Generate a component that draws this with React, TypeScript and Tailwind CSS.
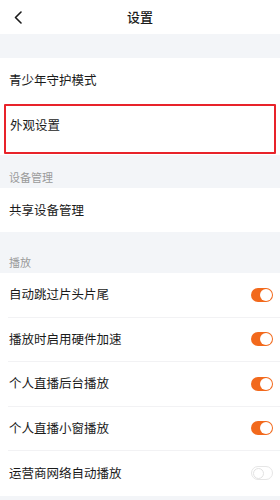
const font = { fontFamily: '"Noto Sans CJK SC", "Noto Sans", sans-serif' };

const Toggle = ({ on }: { on: boolean }) =>
  on ? (
    <div className="w-[22px] h-[14px] rounded-full bg-[#f2691c] flex items-center justify-end pr-[1px]">
      <div className="w-[12px] h-[12px] rounded-full bg-white" />
    </div>
  ) : (
    <div className="w-[22px] h-[14px] rounded-full bg-white border border-[#e6e6e6] flex items-center pl-[1px]">
      <div className="w-[11px] h-[11px] rounded-full bg-white border border-[#e2e2e2]" />
    </div>
  );

const SectionLabel = ({ title, h }: { title: string; h: string }) => (
  <div className={`${h} flex items-end px-[9px] pb-[4px]`}>
    <span className="text-[11px] leading-[14px] text-[#9a9a9a]">{title}</span>
  </div>
);

export default function App() {
  const playItems = [
    { label: '自动跳过片头片尾', on: true },
    { label: '播放时启用硬件加速', on: true },
    { label: '个人直播后台播放', on: true },
    { label: '个人直播小窗播放', on: true },
    { label: '运营商网络自动播放', on: false },
  ];

  return (
    <div style={font} className="w-[280px] min-h-[500px] bg-[#f3f5f8] text-[#1a1a1a]">
      {/* header */}
      <div className="h-[34px] bg-white grid grid-cols-[40px_1fr_40px] items-center">
        <div className="pl-[14px] flex items-center">
          <svg width="8" height="13" viewBox="0 0 8 13" fill="none">
            <path d="M7 1 1.5 6.5 7 12" stroke="#1a1a1a" strokeWidth="1.6" strokeLinecap="round" strokeLinejoin="round" />
          </svg>
        </div>
        <div className="text-center text-[13px] font-medium">设置</div>
        <div />
      </div>

      <div className="h-[24px]" />

      <div className="bg-white">
        <div className="h-[44px] flex items-center px-[9px] text-[12.5px]">青少年守护模式</div>
        <div className="h-[53px] pt-[2px] pb-[1px] px-[4px]">
          <div className="h-full border-2 border-[#e8232a] rounded-[1px] pl-[4px] pt-[11px] text-[12.5px] leading-[16px]">
            外观设置
          </div>
        </div>
      </div>

      <SectionLabel title="设备管理" h="h-[33px]" />

      <div className="bg-white h-[44px] flex items-center px-[9px] text-[12.5px]">共享设备管理</div>

      <SectionLabel title="播放" h="h-[41px]" />

      <div className="bg-white">
        {playItems.map((item, i) => (
          <div key={item.label} className="pl-[8px]">
            <div
              className={`h-[44.5px] flex items-center justify-between pl-[1px] pr-[7px] ${
                i < playItems.length - 1 ? 'border-b border-[#f2f2f4]' : ''
              }`}
            >
              <span className="text-[12.5px]">{item.label}</span>
              <Toggle on={item.on} />
            </div>
          </div>
        ))}
      </div>
    </div>
  );
}
